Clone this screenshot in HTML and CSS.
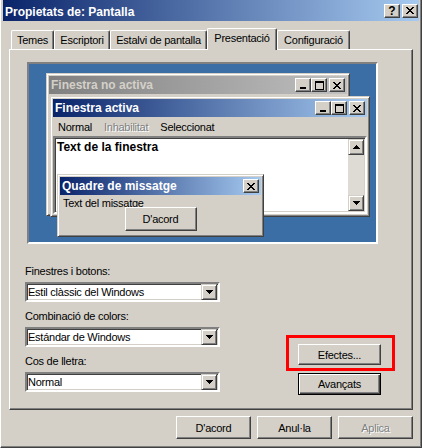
FILE: index.html
```html
<!DOCTYPE html>
<html lang="ca">

<head>
  <meta charset="UTF-8" />
  <meta name="viewport" content="width=device-width, initial-scale=1.0" />
  <title>Propietats de: Pantalla</title>
  <link rel="stylesheet" href="styles.css">
</head>

<body>
  <div class="dialog">
    <header class="titlebar">
      <span class="titlebar_text">Propietats de: Pantalla</span>
      <div class="titlebar_buttons">
        <button class="capbtn capbtn-help">?</button>
        <button class="capbtn">
          <svg width="8" height="7" viewBox="0 0 8 7"><path d="M0 0h2v1H0zM6 0h2v1H6zM1 1h2v1H1zM5 1h2v1H5zM2 2h4v1H2zM3 3h2v1H3zM2 4h4v1H2zM1 5h2v1H1zM5 5h2v1H5zM0 6h2v1H0zM6 6h2v1H6z"/></svg>
        </button>
      </div>
    </header>

    <div class="dialog_body">
      <nav class="tabs">
        <span class="tab" style="width: 43px">Temes</span>
        <span class="tab" style="width: 56px">Escriptori</span>
        <span class="tab" style="width: 97px">Estalvi de pantalla</span>
        <span class="tab tab-active" style="width: 70px">Presentació</span>
        <span class="tab" style="width: 73px">Configuració</span>
      </nav>

      <section class="sheet">
        <!-- preview of the window colours, windows overlap like on a desktop -->
        <div class="preview">
          <div class="win win-inactive">
            <div class="win_title win_title-inactive">
              <span>Finestra no activa</span>
              <span class="win_title_buttons">
                <span class="capbtn"><svg class="glyph-min" width="6" height="2" viewBox="0 0 6 2"><path d="M0 0h6v2H0z"/></svg></span>
                <span class="capbtn"><svg width="9" height="9" viewBox="0 0 9 9"><path fill-rule="evenodd" d="M0 0h9v9H0zM1 2v6h7V2z"/></svg></span>
                <span class="capbtn capbtn-close"><svg width="8" height="7" viewBox="0 0 8 7"><path d="M0 0h2v1H0zM6 0h2v1H6zM1 1h2v1H1zM5 1h2v1H5zM2 2h4v1H2zM3 3h2v1H3zM2 4h4v1H2zM1 5h2v1H1zM5 5h2v1H5zM0 6h2v1H0zM6 6h2v1H6z"/></svg></span>
              </span>
            </div>
          </div>

          <div class="win win-active">
            <div class="win_title">
              <span>Finestra activa</span>
              <span class="win_title_buttons">
                <span class="capbtn"><svg class="glyph-min" width="6" height="2" viewBox="0 0 6 2"><path d="M0 0h6v2H0z"/></svg></span>
                <span class="capbtn"><svg width="9" height="9" viewBox="0 0 9 9"><path fill-rule="evenodd" d="M0 0h9v9H0zM1 2v6h7V2z"/></svg></span>
                <span class="capbtn capbtn-close"><svg width="8" height="7" viewBox="0 0 8 7"><path d="M0 0h2v1H0zM6 0h2v1H6zM1 1h2v1H1zM5 1h2v1H5zM2 2h4v1H2zM3 3h2v1H3zM2 4h4v1H2zM1 5h2v1H1zM5 5h2v1H5zM0 6h2v1H0zM6 6h2v1H6z"/></svg></span>
              </span>
            </div>
            <div class="win_menu">
              <span>Normal</span>
              <span class="disabled">Inhabilitat</span>
              <span>Seleccionat</span>
            </div>
            <div class="win_text">
              <span class="win_text_content">Text de la finestra</span>
              <div class="scrollbar">
                <span class="scrollbar_btn"><svg width="7" height="4" viewBox="0 0 7 4"><path d="M3 0h1v1h1v1h1v1h1v1H0V3h1V2h1V1h1z"/></svg></span>
                <span class="scrollbar_btn"><svg width="7" height="4" viewBox="0 0 7 4"><path d="M0 0h7v1H6v1H5v1H4v1H3V3H2V2H1V1H0z"/></svg></span>
              </div>
            </div>
          </div>

          <div class="win win-msg">
            <div class="win_title">
              <span>Quadre de missatge</span>
              <span class="win_title_buttons">
                <span class="capbtn capbtn-close"><svg width="8" height="7" viewBox="0 0 8 7"><path d="M0 0h2v1H0zM6 0h2v1H6zM1 1h2v1H1zM5 1h2v1H5zM2 2h4v1H2zM3 3h2v1H3zM2 4h4v1H2zM1 5h2v1H1zM5 5h2v1H5zM0 6h2v1H0zM6 6h2v1H6z"/></svg></span>
              </span>
            </div>
            <div class="msg_body">
              <span class="msg_text">Text del missatge</span>
              <button class="btn msg_btn">D'acord</button>
            </div>
          </div>
        </div>

        <div class="options">
          <div class="fields">
            <label class="field_label field_label-first">Finestres i botons:</label>
            <div class="combo">
              <span class="combo_value">Estil clàssic del Windows</span>
              <span class="combo_btn"><svg width="7" height="4" viewBox="0 0 7 4"><path d="M0 0h7v1H6v1H5v1H4v1H3V3H2V2H1V1H0z"/></svg></span>
            </div>
            <label class="field_label">Combinació de colors:</label>
            <div class="combo">
              <span class="combo_value">Estándar de Windows</span>
              <span class="combo_btn"><svg width="7" height="4" viewBox="0 0 7 4"><path d="M0 0h7v1H6v1H5v1H4v1H3V3H2V2H1V1H0z"/></svg></span>
            </div>
            <label class="field_label">Cos de lletra:</label>
            <div class="combo">
              <span class="combo_value">Normal</span>
              <span class="combo_btn"><svg width="7" height="4" viewBox="0 0 7 4"><path d="M0 0h7v1H6v1H5v1H4v1H3V3H2V2H1V1H0z"/></svg></span>
            </div>
          </div>

          <div class="side">
            <button class="btn side_btn">Efectes...</button>
            <button class="btn btn-default side_btn">Avançats</button>
            <span class="highlight"></span>
          </div>
        </div>
      </section>

      <footer class="footer">
        <button class="btn footer_btn">D'acord</button>
        <button class="btn footer_btn">Anul·la</button>
        <button class="btn footer_btn disabled">Aplica</button>
      </footer>
    </div>
  </div>
</body>
</html>
```

FILE: styles.css
```css
* {
  box-sizing: border-box;
}

body {
  margin: 0;
  background: #d4d0c8;
  font-family: "Liberation Sans", Arial, sans-serif;
  font-size: 11px;
  letter-spacing: -0.25px;
  color: #000;
}

svg {
  display: block;
  shape-rendering: crispEdges;
}

button {
  font: inherit;
  letter-spacing: inherit;
  color: inherit;
}

.dialog {
  display: flex;
  flex-direction: column;
  width: 422px;
  height: 448px;
  padding: 0 2px 1px 2px;
  border-left: 1px solid #fff;
  border-right: 1px solid #404040;
  border-bottom: 1px solid #404040;
  box-shadow: inset -1px -1px #808080;
  background: #d4d0c8;
}

/* title bar */
.titlebar {
  display: flex;
  align-items: center;
  justify-content: space-between;
  height: 21px;
  padding: 0 1px 0 2px;
  background: linear-gradient(to right, #0a246a, #a6caf0);
}

.titlebar_text {
  padding-top: 2px;
  font-weight: bold;
  font-size: 12px;
  letter-spacing: 0;
  color: #fff;
}

.titlebar_buttons {
  display: flex;
  gap: 2px;
}

.capbtn {
  display: flex;
  align-items: center;
  justify-content: center;
  width: 16px;
  height: 14px;
  padding: 0;
  background: #d4d0c8;
  border: 1px solid;
  border-color: #fff #404040 #404040 #fff;
  box-shadow: inset -1px -1px #808080;
}

.capbtn-help {
  font-weight: bold;
  font-size: 12px;
  letter-spacing: 0;
  line-height: 1;
}

.glyph-min {
  margin-top: 6px;
}

/* body */
.dialog_body {
  display: flex;
  flex-direction: column;
  padding: 0 6px;
}

.tabs {
  display: flex;
  align-items: flex-start;
  height: 28px;
  padding: 9px 0 0 2px;
}

.tab {
  display: flex;
  align-items: center;
  justify-content: center;
  height: 19px;
  padding-bottom: 1px;
  background: #d4d0c8;
  border-left: 1px solid #fff;
  border-top: 1px solid #fff;
  border-right: 1px solid #404040;
  border-radius: 2px 2px 0 0;
  box-shadow: inset -1px 0 #808080;
  white-space: nowrap;
}

.tab-active {
  position: relative;
  z-index: 1;
  height: 22px;
  margin-top: -2px;
  padding-bottom: 3px;
}

.sheet {
  height: 361px;
  padding: 12px 0 0 15px;
  border-left: 1px solid #fff;
  border-top: 1px solid #fff;
  border-right: 1px solid #404040;
  border-bottom: 1px solid #404040;
  box-shadow: inset -1px -1px #808080;
}

/* preview */
.preview {
  position: relative;
  width: 351px;
  height: 182px;
  margin-left: 2px;
  background: #3a6ea5;
  border: 2px solid;
  border-color: #808080 #fff #fff #808080;
}

.win {
  position: absolute;
  display: flex;
  flex-direction: column;
  padding: 2px;
  background: #d4d0c8;
  border: 1px solid;
  border-color: #d4d0c8 #404040 #404040 #d4d0c8;
  box-shadow: inset 1px 1px #fff, inset -1px -1px #808080;
}

.win-inactive {
  left: 17px;
  top: 9px;
  width: 304px;
  height: 143px;
}

.win-active {
  left: 21px;
  top: 32px;
  width: 320px;
  height: 121px;
}

.win-msg {
  left: 28px;
  top: 110px;
  width: 207px;
  height: 63px;
}

.win_title {
  display: flex;
  align-items: center;
  justify-content: space-between;
  flex: none;
  height: 18px;
  padding: 0 2px 0 2px;
  background: linear-gradient(to right, #0a246a, #a6caf0);
  font-weight: bold;
  font-size: 12px;
  letter-spacing: 0;
  color: #fff;
}

.win_title-inactive {
  background: linear-gradient(to right, #808080, #c0c0c0);
  color: #d4d0c8;
}

.win_title_buttons {
  display: flex;
}

.capbtn-close {
  margin-left: 2px;
}

.win_menu {
  display: flex;
  align-items: center;
  gap: 12px;
  flex: none;
  height: 19px;
  padding-left: 5px;
}

.disabled {
  color: #808080;
  text-shadow: 1px 1px #fff;
}

.win_text {
  display: flex;
  flex: 1;
  background: #fff;
  border: 2px solid;
  border-color: #808080 #fff #fff #808080;
  box-shadow: inset 1px 1px #404040, inset -1px -1px #d4d0c8;
}

.win_text_content {
  flex: 1;
  padding: 2px 0 0 2px;
  font-weight: bold;
  font-size: 12px;
  letter-spacing: 0;
}

.scrollbar {
  display: flex;
  flex-direction: column;
  justify-content: space-between;
  width: 16px;
  margin: 1px 1px 1px 0;
  background: #dedbd5;
}

.scrollbar_btn {
  display: flex;
  align-items: center;
  justify-content: center;
  height: 16px;
  background: #d4d0c8;
  border: 1px solid;
  border-color: #d4d0c8 #404040 #404040 #d4d0c8;
  box-shadow: inset 1px 1px #fff, inset -1px -1px #808080;
}

.msg_body {
  display: flex;
  flex-direction: column;
  align-items: center;
}

.msg_text {
  align-self: flex-start;
  margin: 2px 0 0 3px;
  line-height: 13px;
}

.msg_btn {
  position: relative;
  width: 72px;
  height: 24px;
  margin-top: -3px;
}

/* lower part */
.options {
  display: flex;
  margin-top: 21px;
}

.fields {
  display: flex;
  flex-direction: column;
  width: 195px;
}

.field_label {
  margin-top: 8px;
  line-height: 13px;
}

.field_label-first {
  margin-top: 0;
}

.combo {
  display: flex;
  align-items: center;
  height: 20px;
  margin-top: 4px;
  padding-right: 1px;
  background: #fff;
  border: 2px solid;
  border-color: #808080 #fff #fff #808080;
  box-shadow: inset 1px 1px #404040, inset -1px -1px #d4d0c8;
}

.combo_value {
  flex: 1;
  padding-left: 1px;
}

.combo_btn {
  display: flex;
  align-items: center;
  justify-content: center;
  width: 16px;
  height: 16px;
  background: #d4d0c8;
  border: 1px solid;
  border-color: #d4d0c8 #404040 #404040 #d4d0c8;
  box-shadow: inset 1px 1px #fff, inset -1px -1px #808080;
}

.side {
  position: relative;
  display: flex;
  flex-direction: column;
  gap: 8px;
  align-self: flex-end;
  margin: 0 0 -3px 78px;
}

.highlight {
  position: absolute;
  left: -12px;
  top: -9px;
  width: 109px;
  height: 36px;
  border: 3px solid #f00;
}

.btn {
  padding: 0;
  background: #d4d0c8;
  border: 1px solid;
  border-color: #fff #404040 #404040 #fff;
  box-shadow: inset -1px -1px #808080;
}

.btn-default {
  border-color: #000;
  box-shadow: inset 1px 1px #fff, inset -1px -1px #404040, inset -2px -2px #808080;
}

.side_btn {
  width: 83px;
  height: 21px;
}

.btn-default.side_btn {
  height: 22px;
}

.footer {
  display: flex;
  justify-content: flex-end;
  gap: 6px;
  margin-top: 6px;
}

.footer_btn {
  width: 75px;
  height: 23px;
}
```
